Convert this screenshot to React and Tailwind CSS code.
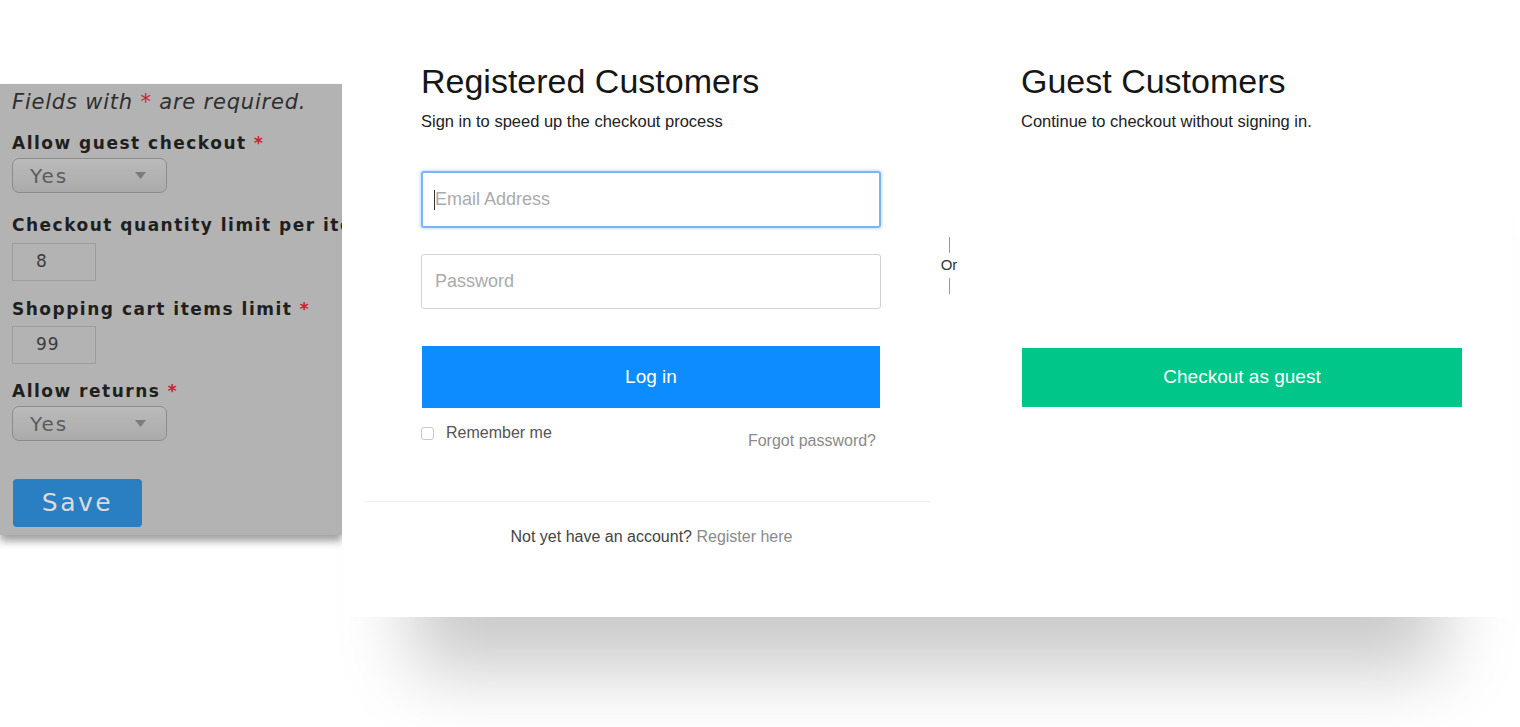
import { useState } from "react";

const panelFont = { fontFamily: '"DejaVu Sans", "Liberation Sans", sans-serif' };

function Required() {
  return <span className="text-[#c4242a]">*</span>;
}

function FakeSelect({ value }) {
  return (
    <div className="w-[155px] h-[35px] rounded-[7px] border border-[#8c8c8c] bg-gradient-to-b from-[#bababa] to-[#ababab] flex items-center justify-between pl-[17px] pr-[20px]">
      <span className="text-[20px] tracking-[2px] text-[#5c5c5c]">{value}</span>
      <svg width="11" height="7" viewBox="0 0 11 7">
        <path d="M0 0 L11 0 L5.5 7 Z" fill="#7c7c7c" />
      </svg>
    </div>
  );
}

function NumberBox({ value }) {
  return (
    <div className="w-[84px] h-[38px] border border-[#9d9d9d] flex items-center pl-[23px] text-[17px] tracking-[1px] text-[#3c3c3c]">
      {value}
    </div>
  );
}

function SettingsPanel() {
  return (
    <aside
      style={panelFont}
      className="w-[342px] shrink-0 mt-[84px] h-[451px] bg-[#b3b3b3] pl-3 whitespace-nowrap shadow-[0_6px_8px_rgba(0,0,0,0.38)]"
    >
      <p className="pt-[6px] italic text-[21px] leading-[24px] tracking-[0.8px] text-[#2f2f2f]">
        Fields with <Required /> are required.
      </p>

      <p className="mt-[19px] font-bold text-[17px] leading-[20px] tracking-[1.5px] text-[#1f1f1f]">
        Allow guest checkout <Required />
      </p>
      <div className="mt-[5px]">
        <FakeSelect value="Yes" />
      </div>

      <p className="mt-[22px] font-bold text-[17px] leading-[20px] tracking-[1.5px] text-[#1f1f1f]">
        Checkout quantity limit per item <Required />
      </p>
      <div className="mt-[8px]">
        <NumberBox value="8" />
      </div>

      <p className="mt-[18px] font-bold text-[17px] leading-[20px] tracking-[1.5px] text-[#1f1f1f]">
        Shopping cart items limit <Required />
      </p>
      <div className="mt-[7px]">
        <NumberBox value="99" />
      </div>

      <p className="mt-[17px] font-bold text-[17px] leading-[20px] tracking-[1.5px] text-[#1f1f1f]">
        Allow returns <Required />
      </p>
      <div className="mt-[5px]">
        <FakeSelect value="Yes" />
      </div>

      <button className="mt-[38px] ml-px w-[129px] h-[48px] rounded-[4px] bg-[#2a7fc3] text-[25px] tracking-[2.5px] text-[#dadada]">
        Save
      </button>
    </aside>
  );
}

function Checkout() {
  const [email, setEmail] = useState("");
  const [password, setPassword] = useState("");
  const [remember, setRemember] = useState(false);

  return (
    <main
      style={{ fontFamily: '"Liberation Sans", Arial, sans-serif' }}
      className="relative z-10 shrink-0 w-[1170px] h-[617px] bg-white flex shadow-[0_123px_70px_-70px_rgba(0,0,0,0.21)]"
    >
      {/* registered customers */}
      <section className="ml-[23px] w-[565px] flex flex-col">
        <div className="pl-[56px] pr-[49px] pt-[61px]">
          <h2 className="text-[34px] leading-[40px] text-[#161616]">Registered Customers</h2>
          <p className="mt-[10px] text-[16.5px] leading-[20px] text-[#222]">
            Sign in to speed up the checkout process
          </p>

          <div className="relative mt-[40px]">
            <input
              type="email"
              value={email}
              onChange={(e) => setEmail(e.target.value)}
              placeholder="Email Address"
              className="w-full h-[57px] rounded-[3px] border-2 border-[#79b4f3] pl-[12px] text-[18px] text-[#333] outline-none placeholder:text-[#ababab] shadow-[0_0_3px_1px_rgba(90,160,240,0.35)]"
            />
            {!email && <span className="absolute left-[13px] top-[19px] w-px h-[20px] bg-[#333]" />}
          </div>

          <input
            type="password"
            value={password}
            onChange={(e) => setPassword(e.target.value)}
            placeholder="Password"
            className="mt-[26px] w-full h-[55px] rounded-[3px] border border-[#d2d2d2] pl-[13px] text-[18px] text-[#333] outline-none placeholder:text-[#ababab]"
          />

          <button className="mt-[37px] ml-px w-[458px] h-[62px] bg-[#0c8cff] text-white text-[19px]">
            Log in
          </button>

          <div className="mt-[15px] flex items-start justify-between">
            <label className="flex items-center h-[20px] gap-[12px] cursor-pointer">
              <input
                type="checkbox"
                checked={remember}
                onChange={(e) => setRemember(e.target.checked)}
                className="appearance-none w-[13px] h-[13px] rounded-[3px] border border-[#c9c9c9] bg-white"
              />
              <span className="text-[16px] text-[#555]">Remember me</span>
            </label>
            <a href="#" className="mt-[8px] mr-[5px] text-[16px] leading-[20px] text-[#8a8a8a]">
              Forgot password?
            </a>
          </div>
        </div>

        <div className="mt-[50px] h-px bg-[#eeeeee]" />

        <p className="mt-[25px] pl-[8px] text-center text-[16px] leading-[20px] text-[#444]">
          Not yet have an account? <a href="#" className="text-[#8a8a8a]">Register here</a>
        </p>
      </section>

      {/* or divider */}
      <div className="w-[38px] flex flex-col items-center pt-[237px]">
        <span className="w-px h-[16px] bg-[#9a9a9a]" />
        <span className="text-[15px] leading-[24px] text-[#333]">Or</span>
        <span className="mt-px w-px h-[16px] bg-[#9a9a9a]" />
      </div>

      {/* guest customers */}
      <section className="ml-[53px] w-[441px] pt-[61px]">
        <h2 className="text-[34px] leading-[40px] text-[#161616]">Guest Customers</h2>
        <p className="mt-[10px] text-[16.5px] leading-[20px] text-[#222]">
          Continue to checkout without signing in.
        </p>
        <button className="mt-[217px] ml-px w-[440px] h-[59px] bg-[#00c689] text-white text-[19px]">
          Checkout as guest
        </button>
      </section>
    </main>
  );
}

export default function App() {
  return (
    <div className="w-full h-[727px] bg-white flex items-start overflow-hidden">
      <SettingsPanel />
      <Checkout />
    </div>
  );
}
